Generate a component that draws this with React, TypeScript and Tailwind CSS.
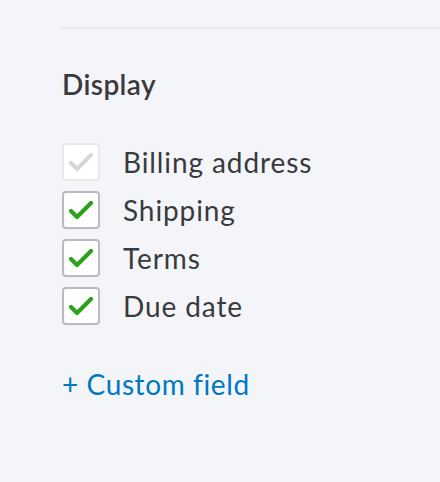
import React, { useState } from 'react';

type Item = { label: string; checked: boolean; disabled?: boolean };

const initial: Item[] = [
  { label: 'Billing address', checked: true, disabled: true },
  { label: 'Shipping', checked: true },
  { label: 'Terms', checked: true },
  { label: 'Due date', checked: true },
];

function Check({ color }: { color: string }) {
  return (
    <svg width="26" height="20" viewBox="0 0 26 20" fill="none">
      <path d="M3 11 L9 17 L23 3" stroke={color} strokeWidth="4.2" strokeLinecap="round" strokeLinejoin="round" />
    </svg>
  );
}

export default function App() {
  const [items, setItems] = useState(initial);

  const toggle = (i: number) => {
    setItems(items.map((it, idx) => (idx === i && !it.disabled ? { ...it, checked: !it.checked } : it)));
  };

  return (
    <div className="min-h-screen w-[440px] h-[482px] bg-[#f4f5f8] font-['Lato',sans-serif] text-[#393a3d] overflow-hidden">
      <div className="pt-[27px] pl-[61px]">
        <div className="h-[2px] bg-[#e9eaee]" />
      </div>
      <div className="pl-[62px]">
        <h2 className="mt-[39px] text-[28px] leading-[32px] font-semibold tracking-[0.4px]">Display</h2>
        <div className="mt-[43px] flex flex-col gap-[10px]">
          {items.map((it, i) => (
            <label key={it.label} className="flex items-center gap-[23px] cursor-pointer" onClick={() => toggle(i)}>
              <span
                className={
                  it.disabled
                    ? 'w-[38px] h-[38px] rounded-[4px] border-2 border-[#e8e9ec] bg-white flex items-center justify-center'
                    : 'w-[38px] h-[38px] rounded-[4px] border-2 border-[#b9bbc0] bg-white flex items-center justify-center'
                }
              >
                {it.checked && <Check color={it.disabled ? '#d4d7dc' : '#2ca01c'} />}
              </span>
              <span className="text-[28px] leading-[38px] tracking-[0.9px]">{it.label}</span>
            </label>
          ))}
        </div>
        <button className="mt-[43px] text-[28px] leading-[32px] tracking-[0.6px] text-[#0077c5]">+ Custom field</button>
      </div>
    </div>
  );
}
